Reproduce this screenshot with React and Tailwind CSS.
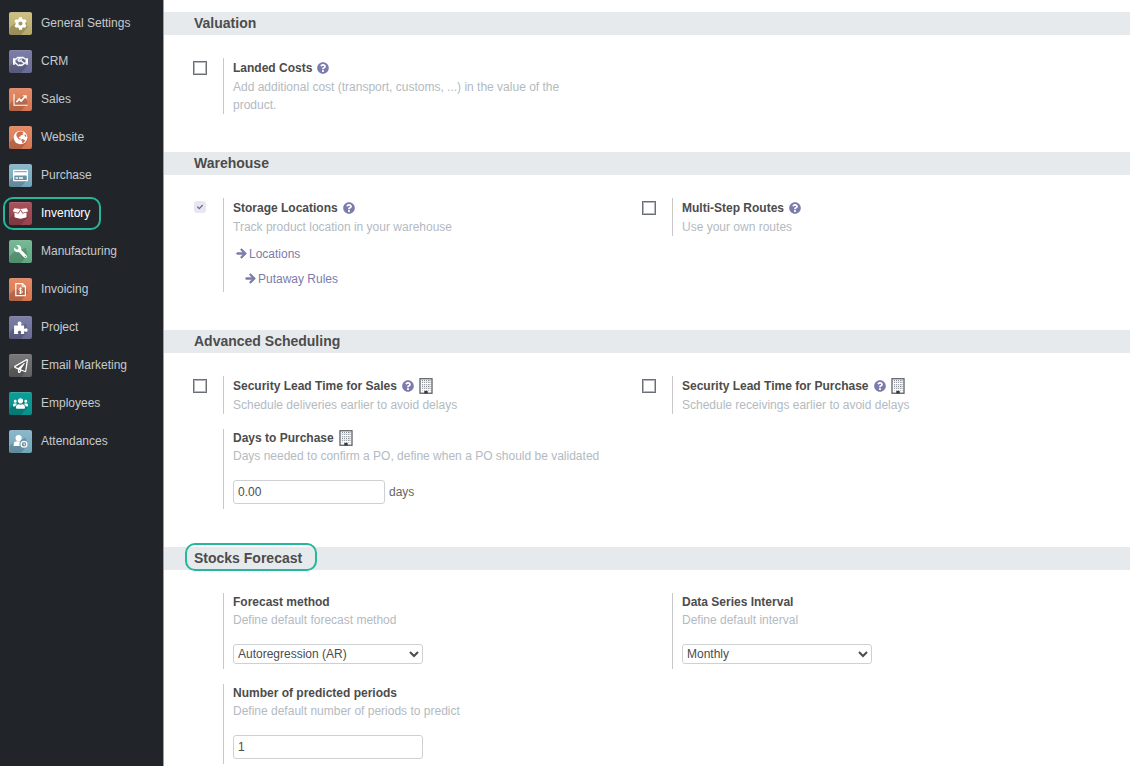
import {
  FaCog,
  FaRegHandshake,
  FaRegCreditCard,
  FaBoxOpen,
  FaWrench,
  FaRegPaperPlane,
  FaUsers,
  FaQuestionCircle,
  FaArrowRight,
  FaCheck,
} from "react-icons/fa";

function GlobeIcon({ className }) {
  return (
    <svg viewBox="0 0 14 14" className={className} aria-hidden="true">
      <circle cx="7" cy="7" r="6.4" fill="#fff" />
      <path
        d="M5.2 1.6 7.6 1.2 9.8 2 8.8 3 9.9 3.6 8.6 4.6 7.4 4.9 6.8 6 5.3 6.6 5.7 7.6 7 8 7.2 9 5.8 8.8 4.2 7.4 3.1 5.2 3.4 3Z"
        fill="#cf6f4c"
      />
      <path d="M8.2 8.4 10.2 8.8 11.4 9.9 10.2 11.7 8.6 12.6 8.6 10.8 7.6 9.6Z" fill="#cf6f4c" />
      <path d="M11 3.6 12.6 5.6 12 6.6 10.8 5.6Z" fill="#cf6f4c" />
    </svg>
  );
}

function ChartIcon({ className }) {
  return (
    <svg viewBox="0 0 15 15" className={className} aria-hidden="true" fill="none" stroke="#fff">
      <path d="M1 2v11.3h13.5" strokeWidth="1.1" />
      <path d="M3.4 10.2 6.2 7 8.2 9 11.6 5" strokeWidth="1.8" />
      <path d="M9.6 3.2h4v4Z" fill="#fff" stroke="none" />
    </svg>
  );
}

function InvoiceIcon({ className }) {
  return (
    <svg viewBox="0 0 15 15" className={className} aria-hidden="true" fill="none" stroke="#fff">
      <path d="M2.8 1.6h6.6l3 3v9H2.8Z" strokeWidth="1.2" />
      <path d="M9.2 1.8v3h3" strokeWidth="1" />
      <path
        d="M9.3 7c-.3-.6-.9-.8-1.7-.8-1 0-1.7.4-1.7 1.2 0 1.7 3.5.8 3.5 2.5 0 .8-.8 1.2-1.8 1.2-.8 0-1.5-.3-1.8-.9M7.6 5.3v6.7"
        strokeWidth="1"
      />
    </svg>
  );
}

function PuzzleIcon({ className }) {
  return (
    <svg viewBox="0 0 14 14" className={className} aria-hidden="true" fill="#fff">
      <path d="M1 5.2h3.3c.5 0 .6-.4.3-.9A1.9 1.9 0 0 1 4.3 3.2C4.3 2.1 5.1 1.3 6.1 1.3S8 2.1 8 3.2c0 .5-.1.8-.4 1.1-.3.5-.1.9.4.9h2.4v2.5c0 .6.4.7.8.4.3-.3.6-.5 1-.5.9 0 1.5.8 1.5 1.7s-.6 1.8-1.5 1.8c-.4 0-.7-.2-1-.5-.4-.3-.8-.2-.8.4V13H7.7c-.5 0-.6-.4-.3-.8.2-.3.3-.5.3-.8 0-.8-.7-1.4-1.6-1.4s-1.6.6-1.6 1.4c0 .3.1.5.3.8.3.4.2.8-.3.8H1Z" />
    </svg>
  );
}

function AttendanceIcon({ className }) {
  return (
    <svg viewBox="0 0 15 15" className={className} aria-hidden="true" fill="#fff">
      <circle cx="5.6" cy="4" r="3.1" />
      <path d="M.6 12V10.200C.6 8.400 2 7.300 3.600 7.300H7.400C6.500 8.500 6.200 10.200 6.800 12Z" />
      <circle cx="11" cy="10.300" r="2.900" fill="none" stroke="#fff" strokeWidth="1.300" />
      <path d="M11 8.700v1.800l1.200.5" fill="none" stroke="#fff" strokeWidth="0.900" />
    </svg>
  );
}

function HandshakeIcon({ className }) {
  return <FaRegHandshake className={className} stroke="currentColor" strokeWidth="18" />;
}

function WrenchIcon({ className }) {
  return <FaWrench className={`-scale-x-100 ${className}`} />;
}

function CompanyIcon() {
  return (
    <svg viewBox="0 0 14 16" className="h-4 w-3.5 shrink-0" role="img" aria-label="Company specific">
      <rect x="1" y="0.75" width="12" height="14.5" fill="#fff" stroke="#5b6066" strokeWidth="1.3" />
      <path
        d="M3.5 2v10.5M5.5 2v10.5M7.5 2v10.5M9.5 2v10.5M11 2v10.5"
        stroke="#8b9096"
        strokeWidth="1"
        strokeDasharray="1 1"
      />
      <path d="M2.5 4h9M2.5 7h9M2.5 10h9" stroke="#c3c6ca" strokeWidth="0.8" />
      <rect x="5.3" y="12.8" width="3.4" height="2.6" fill="#33373b" />
    </svg>
  );
}

const apps = [
  { name: "General Settings", tile: "from-[#cfc083] to-[#b5a86c]", Icon: FaCog, size: "size-[13px]" },
  { name: "CRM", tile: "from-[#7b7ea6] to-[#696b94]", Icon: HandshakeIcon, size: "size-[15px]" },
  { name: "Sales", tile: "from-[#e58a66] to-[#d67552]", Icon: ChartIcon, size: "size-[15px]" },
  { name: "Website", tile: "from-[#e58a66] to-[#d67552]", Icon: GlobeIcon, size: "size-[15px]" },
  { name: "Purchase", tile: "from-[#8ab8cb] to-[#73a5ba]", Icon: FaRegCreditCard, size: "size-[15px]" },
  { name: "Inventory", tile: "from-[#a9505a] to-[#98434d]", Icon: FaBoxOpen, size: "size-[15px]", active: true },
  { name: "Manufacturing", tile: "from-[#74ba94] to-[#60a680]", Icon: WrenchIcon, size: "size-[13px]" },
  { name: "Invoicing", tile: "from-[#e58a66] to-[#d67552]", Icon: InvoiceIcon, size: "size-[15px]" },
  { name: "Project", tile: "from-[#7b7ea6] to-[#696b94]", Icon: PuzzleIcon, size: "size-[15px]" },
  { name: "Email Marketing", tile: "from-[#777777] to-[#626262]", Icon: FaRegPaperPlane, size: "size-[14px]" },
  { name: "Employees", tile: "from-[#0a9e98] to-[#08908a]", Icon: FaUsers, size: "size-[15px]" },
  { name: "Attendances", tile: "from-[#8ab8cb] to-[#73a5ba]", Icon: AttendanceIcon, size: "size-[15px]" },
];

function AppTile({ tile, Icon, size }) {
  return (
    <span
      className={`relative grid size-[23px] shrink-0 place-items-center overflow-hidden rounded-[2px] border-t border-white/20 bg-gradient-to-b ${tile}`}
    >
      <svg viewBox="0 0 23 23" className="absolute inset-0 size-full" aria-hidden="true">
        <path d="M4 12 0 16V23H12L19 15 17 7Z" fill="#000" opacity="0.16" />
      </svg>
      <Icon className={`relative text-white ${size}`} />
    </span>
  );
}

function Sidebar() {
  return (
    <nav className="w-[164px] shrink-0 border-r border-[#9a9fa3] bg-[#212529] pt-1">
      {apps.map((app) => (
        <a
          key={app.name}
          href="#"
          className={`relative flex h-[38px] items-center gap-[9px] pl-[9px] ${app.active ? "text-white" : "text-[#c6cacd]"}`}
        >
          <AppTile tile={app.tile} Icon={app.Icon} size={app.size} />
          <span>{app.name}</span>
          {app.active && (
            <span className="absolute top-[3px] left-[3px] h-[33px] w-[98px] rounded-[10px] border-2 border-[#26b69b]" />
          )}
        </a>
      ))}
    </nav>
  );
}

function Section({ title, marked, children }) {
  return (
    <section className="mb-[38px] last:mb-0">
      <h2 className="flex bg-[#e7eaed] pl-[30px] text-[14px] leading-[23px] font-bold text-[#4c4c4c]">
        <span className="relative">
          {title}
          {marked && (
            <span className="absolute -top-1 -left-[9px] h-7 w-[132px] rounded-[10px] border-2 border-[#26b69b]" />
          )}
        </span>
      </h2>
      <div className="mt-[23px] grid grid-cols-2 items-start gap-y-[15px] pr-[39px] pl-[29px]">{children}</div>
    </section>
  );
}

function Setting({ id, label, help, company, text, toggle, locked, children }) {
  return (
    <div className="flex">
      <div className="w-[30px] shrink-0 pt-[3px]">
        {toggle && !locked && (
          <input
            id={id}
            type="checkbox"
            className="block size-[14px] appearance-none border border-[#6c7076] bg-white inset-ring inset-ring-[#b4b7bb] checked:bg-[#7c7bad]"
          />
        )}
        {locked && (
          <span className="relative ml-px block size-3">
            <input
              id={id}
              type="checkbox"
              defaultChecked
              disabled
              className="block size-3 appearance-none rounded-[3px] bg-[#e6e8ee]"
            />
            <FaCheck className="absolute top-[3px] left-[3px] size-[6px] text-[#6664a3]" />
          </span>
        )}
      </div>
      <div className="min-w-0 flex-1 border-l border-[#c8c8c8] pr-10 pl-[9px] leading-[18px]">
        <div className={`flex items-center gap-[5px] ${toggle ? "h-5" : "h-[18px]"}`}>
          <label htmlFor={id} className="font-bold text-[#4c4c4c]">
            {label}
          </label>
          {help && <FaQuestionCircle className="size-3 shrink-0 text-[#7c7bad]" />}
          {company && <CompanyIcon />}
        </div>
        <p className="text-[#b3bac1]">{text}</p>
        {children}
      </div>
    </div>
  );
}

function Field({ children }) {
  return <div className="mt-[15px] mb-[5px] flex items-center gap-1 text-[#666]">{children}</div>;
}

const inputStyle = "h-6 rounded-[3px] border border-[#ced1d4] bg-white px-1 text-[#4c4c4c]";

function Dropdown({ id, options }) {
  return (
    <Field>
      <select id={id} className="h-5 w-[190px] rounded-[3px] border border-[#ced1d4] bg-white text-[#4c4c4c]">
        {options.map((o) => (
          <option key={o}>{o}</option>
        ))}
      </select>
    </Field>
  );
}

function ArrowLink({ children, className }) {
  return (
    <a href="#" className={`flex h-[25px] items-center gap-[2px] text-[#7c7bad] ${className}`}>
      <FaArrowRight className="size-[11px]" stroke="currentColor" strokeWidth="36" />
      {children}
    </a>
  );
}

export default function App() {
  return (
    <div className="flex min-h-screen bg-white font-['Liberation_Sans',Arial,sans-serif] text-[12px]">
      <Sidebar />
      <main className="min-w-0 flex-1 pt-3">
        <Section title="Valuation">
          <Setting
            id="landed"
            toggle
            help
            label="Landed Costs"
            text="Add additional cost (transport, customs, ...) in the value of the product."
          />
        </Section>

        <Section title="Warehouse">
          <Setting
            id="storage"
            toggle
            locked
            help
            label="Storage Locations"
            text="Track product location in your warehouse"
          >
            <div className="mt-[5px] mb-px">
              <ArrowLink className="pl-[3px]">Locations</ArrowLink>
              <ArrowLink className="pl-3">Putaway Rules</ArrowLink>
            </div>
          </Setting>
          <Setting id="routes" toggle help label="Multi-Step Routes" text="Use your own routes" />
        </Section>

        <Section title="Advanced Scheduling">
          <Setting
            id="sales-lead"
            toggle
            help
            company
            label="Security Lead Time for Sales"
            text="Schedule deliveries earlier to avoid delays"
          />
          <Setting
            id="purchase-lead"
            toggle
            help
            company
            label="Security Lead Time for Purchase"
            text="Schedule receivings earlier to avoid delays"
          />
          <Setting
            id="days"
            company
            label="Days to Purchase"
            text="Days needed to confirm a PO, define when a PO should be validated"
          >
            <Field>
              <input id="days" type="text" defaultValue="0.00" className={`${inputStyle} w-[152px]`} />
              <span>days</span>
            </Field>
          </Setting>
        </Section>

        <Section title="Stocks Forecast" marked>
          <Setting id="method" label="Forecast method" text="Define default forecast method">
            <Dropdown id="method" options={["Autoregression (AR)", "Moving Average (MA)"]} />
          </Setting>
          <Setting id="interval" label="Data Series Interval" text="Define default interval">
            <Dropdown id="interval" options={["Monthly", "Weekly", "Daily"]} />
          </Setting>
          <Setting
            id="periods"
            label="Number of predicted periods"
            text="Define default number of periods to predict"
          >
            <Field>
              <input id="periods" type="text" defaultValue="1" className={`${inputStyle} w-[190px]`} />
            </Field>
          </Setting>
        </Section>
      </main>
    </div>
  );
}
